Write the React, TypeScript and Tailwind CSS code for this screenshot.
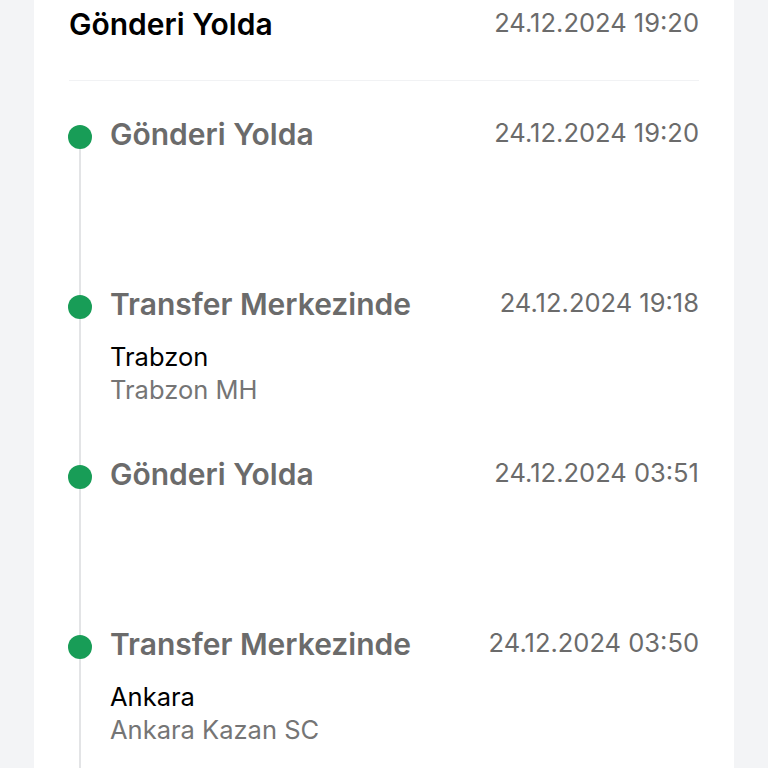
const events = [
  { title: "Gönderi Yolda", date: "24.12.2024 19:20" },
  { title: "Transfer Merkezinde", date: "24.12.2024 19:18", city: "Trabzon", branch: "Trabzon MH" },
  { title: "Gönderi Yolda", date: "24.12.2024 03:51" },
  { title: "Transfer Merkezinde", date: "24.12.2024 03:50", city: "Ankara", branch: "Ankara Kazan SC" },
];

export default function App() {
  return (
    <div className="min-h-screen bg-[#f3f4f6] font-['Inter',sans-serif]">
      <div className="mx-[34px] bg-white px-[35px] pt-[6px] pb-10">
        {/* Header */}
        <div className="flex items-start justify-between border-b border-[#f1f2f4] pb-[38px]">
          <h1 className="text-[30px] leading-[36px] font-semibold text-black">Gönderi Yolda</h1>
          <span className="text-[25.5px] leading-[33px] text-[#6b6b6b]">24.12.2024 19:20</span>
        </div>

        {/* Timeline */}
        <div className="pt-[35px]">
          {events.map((e, i) => (
            <div key={i} className="-ml-px flex gap-[18px]">
              <div className="flex w-6 shrink-0 flex-col items-center">
                <div className={`h-[9px] w-0.5 ${i === 0 ? "bg-transparent" : "bg-[#e3e4e6]"}`} />
                <div className="h-6 w-6 rounded-full bg-[#189d57]" />
                <div className="w-0.5 flex-1 bg-[#e3e4e6]" />
              </div>
              <div className="flex min-h-[170px] flex-1 flex-col pb-[50px]">
                <div className="flex items-start justify-between">
                  <span className="text-[30px] leading-[36px] font-semibold text-[#6b6b6b]">{e.title}</span>
                  <span className="text-[25.5px] leading-[33px] text-[#6b6b6b]">{e.date}</span>
                </div>
                {e.city && (
                  <div className="mt-[18px] text-[25.5px] leading-[33px]">
                    <div className="text-black">{e.city}</div>
                    <div className="text-[#757575]">{e.branch}</div>
                  </div>
                )}
              </div>
            </div>
          ))}
        </div>
      </div>
    </div>
  );
}
